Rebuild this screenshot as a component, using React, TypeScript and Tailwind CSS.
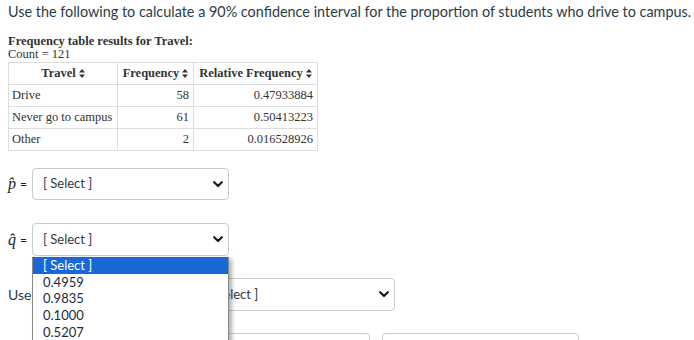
import React from "react";

const Sort = () => (
  <svg width="6" height="9" viewBox="0 0 6 9" className="inline-block ml-[3px] align-[-1px]">
    <path d="M0 3.6 L3 0 L6 3.6 Z" fill="#333" />
    <path d="M0 5.4 L3 9 L6 5.4 Z" fill="#333" />
  </svg>
);

const Chevron = () => (
  <svg width="10" height="7" viewBox="0 0 10 7" className="shrink-0">
    <path d="M1.2 1.2 L5 5 L8.8 1.2" fill="none" stroke="#1a1a1a" strokeWidth="2.2" strokeLinecap="round" strokeLinejoin="round" />
  </svg>
);

const Select = ({ className = "", text = "[ Select ]" }: { className?: string; text?: string }) => (
  <div className={`h-[32px] border border-[#c7cdd1] rounded-[4px] bg-white flex items-center pl-[10px] pr-[5px] justify-between ${className}`}>
    <span className="text-[13px] text-[#2d3b45]">{text}</span>
    <Chevron />
  </div>
);

export default function App() {
  const rows = [
    ["Drive", "58", "0.47933884"],
    ["Never go to campus", "61", "0.50413223"],
    ["Other", "2", "0.016528926"],
  ];
  return (
    <div className="w-[694px] h-[340px] overflow-hidden bg-white pl-[8px] pt-[2px]" style={{ fontFamily: "Lato, 'Noto Sans', sans-serif" }}>
      <p className="text-[14.4px] leading-[20px] text-[#2d3b45] whitespace-nowrap">
        Use the following to calculate a 90% confidence interval for the proportion of students who drive to campus.
      </p>
      <div className="mt-[13px] text-[#333] text-[12.5px] leading-[13px]" style={{ fontFamily: "'Liberation Serif', serif" }}>
        <div className="font-bold">Frequency table results for Travel:</div>
        <div>Count = 121</div>
        <table className="mt-[1px] border-collapse table-fixed w-[309px] whitespace-nowrap">
          <colgroup>
            <col className="w-[109px]" />
            <col className="w-[76px]" />
            <col className="w-[124px]" />
          </colgroup>
          <thead>
            <tr className="h-[22px]">
              <th className="border border-[#ddd] font-bold px-[3px] text-center">Travel<Sort /></th>
              <th className="border border-[#ddd] font-bold px-[3px] text-center">Frequency<Sort /></th>
              <th className="border border-[#ddd] font-bold px-[3px] text-center">Relative Frequency<Sort /></th>
            </tr>
          </thead>
          <tbody>
            {rows.map((r) => (
              <tr key={r[0]} className="h-[22px]">
                <td className="border border-[#ddd] px-[3px] text-left">{r[0]}</td>
                <td className="border border-[#ddd] px-[4px] text-right">{r[1]}</td>
                <td className="border border-[#ddd] px-[4px] text-right">{r[2]}</td>
              </tr>
            ))}
          </tbody>
        </table>
      </div>

      <div className="mt-[17px] flex items-center">
        <span className="w-[24px] flex items-center text-[#1a1a1a]">
          <span className="italic text-[16px]" style={{ fontFamily: "'Liberation Serif', serif" }}>p̂</span>
          <span className="text-[12px] ml-[4px]">=</span>
        </span>
        <Select className="w-[197px]" />
      </div>

      <div className="mt-[23px] flex items-center relative">
        <span className="w-[24px] flex items-center text-[#1a1a1a]">
          <span className="italic text-[16px]" style={{ fontFamily: "'Liberation Serif', serif" }}>q̂</span>
          <span className="text-[12px] ml-[4px]">=</span>
        </span>
        <div className="relative">
          <Select className="w-[197px] h-[33px]" />
          <div className="absolute left-0 top-[34px] w-[197px] h-[90px] bg-white border-l border-r border-[#8a8a8a] shadow-[3px_2px_4px_rgba(0,0,0,0.3)] z-10 text-[13px] text-[#1c2b3a]">
            <div className="h-[16.7px] leading-[16.7px] bg-[#1a67d6] text-white pl-[10px]">[ Select ]</div>
            {["0.4959", "0.9835", "0.1000", "0.5207"].map((v) => (
              <div key={v} className="h-[16.7px] leading-[16.7px] pl-[10px]">{v}</div>
            ))}
          </div>
        </div>
      </div>

      <div className="mt-[22px] flex items-center text-[14px] text-[#2d3b45]">
        <span className="w-[190px] whitespace-nowrap">Use</span>
        <Select className="w-[197px] h-[33px]" />
      </div>

      <div className="mt-[22px] flex items-start gap-[12px]">
        <div className="ml-[90px] w-[272px] h-[32px] border border-[#c7cdd1] rounded-[4px]" />
        <div className="w-[197px] h-[32px] border border-[#c7cdd1] rounded-[4px]" />
      </div>
    </div>
  );
}
